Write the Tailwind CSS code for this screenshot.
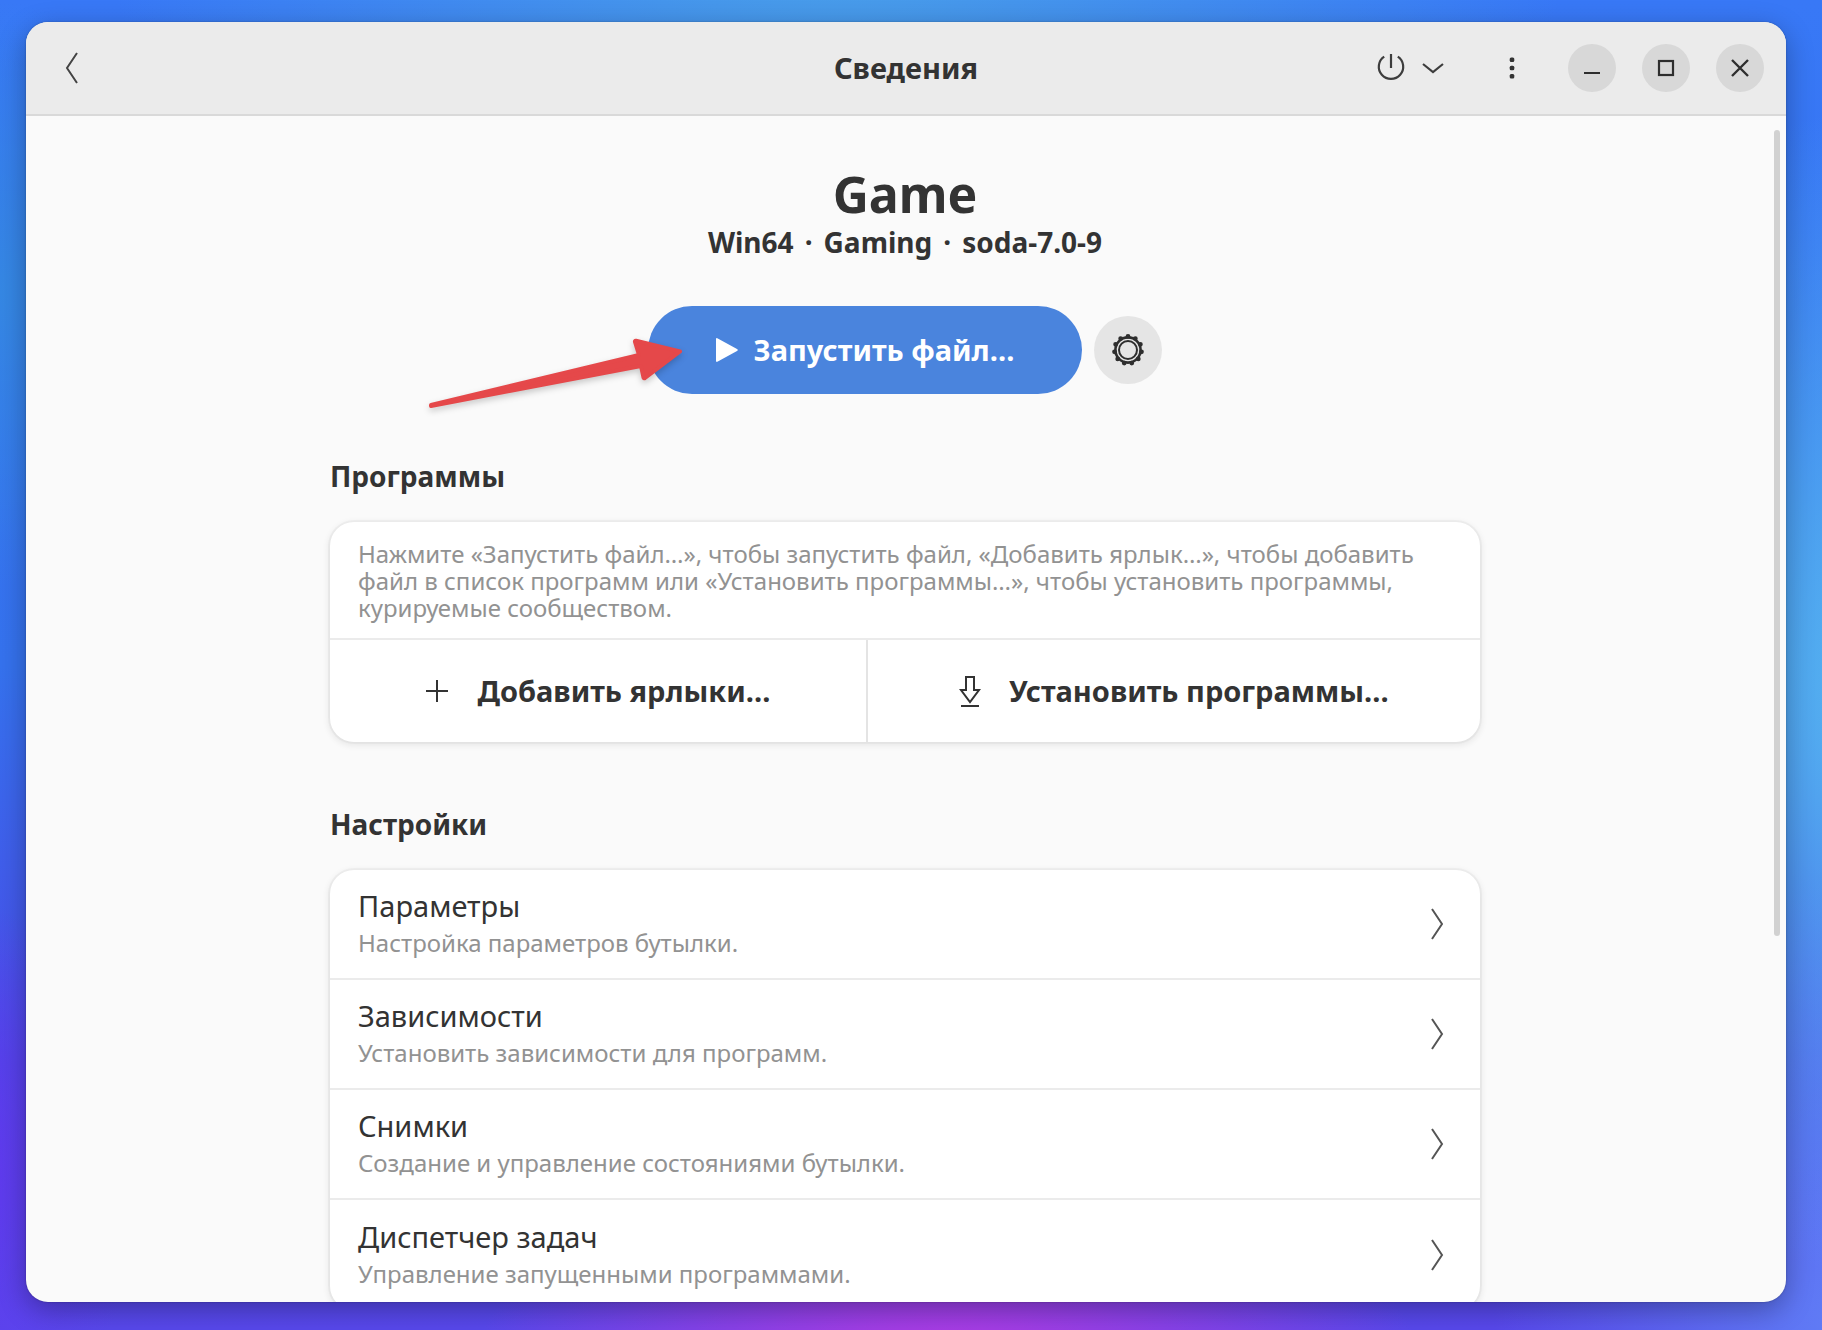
<!DOCTYPE html>
<html lang="ru">
<head>
<meta charset="utf-8">
<meta name="viewport" content="width=device-width, initial-scale=1">
<title>Сведения</title>
<script src="https://cdn.jsdelivr.net/npm/@tailwindcss/browser@4"></script>
</head>
<body class="h-screen overflow-hidden pt-[22px] pr-[36px] pb-[28px] pl-[26px] font-['Noto_Sans',sans-serif] text-[#333333] bg-[radial-gradient(ellipse_26%_16%_at_52%_103%,#b83ae4,transparent),radial-gradient(ellipse_24%_44%_at_104%_52%,#58b8f0,transparent),radial-gradient(ellipse_20%_34%_at_102%_100%,#6080f6,transparent),radial-gradient(ellipse_40%_30%_at_46%_-4%,#4aa0e8,transparent),radial-gradient(ellipse_10%_22%_at_0%_22%,#3588e4,transparent),radial-gradient(ellipse_10%_20%_at_-2%_88%,#6238ee,transparent),linear-gradient(to_bottom,#3878f6,#3572ee_50%,#4a4ae8_80%,#5848ec)]">
<div class="flex h-full flex-col overflow-hidden rounded-[22px] bg-[#fafafa] shadow-[0_0_2px_rgba(0,0,0,0.3),0_8px_28px_rgba(0,0,0,0.3)]">
  <header class="grid h-[94px] shrink-0 grid-cols-[1fr_auto_1fr] items-center border-b-2 border-[#d9d9d9] bg-[#ebebeb] pr-[22px] pl-[22px]">
    <button type="button" aria-label="Назад" class="flex size-[48px] items-center justify-center justify-self-start">
      <svg class="h-[32px] w-[16px]" viewBox="0 0 16 32" fill="none" stroke="#444" stroke-width="2"><path d="M13 1 3 16l10 15"/></svg>
    </button>
    <h1 class="text-[29px] leading-[36px] font-bold">Сведения</h1>
    <div class="flex items-center justify-self-end">
      <button type="button" aria-label="Питание" class="mr-[48px] flex items-center gap-[16px]">
        <svg class="size-[30px]" viewBox="0 0 30 30" fill="none" stroke="#3d3d3d" stroke-width="2.2"><path d="M15 1v14M8.200 3.600a12.200 12.200 0 1 0 13.600 0"/></svg>
        <svg class="h-[12px] w-[22px]" viewBox="0 0 22 12" fill="none" stroke="#3d3d3d" stroke-width="2.2"><path d="m1 2 10 8 10-8"/></svg>
      </button>
      <button type="button" aria-label="Меню" class="mr-[36px] flex w-[40px] justify-center">
        <svg class="h-[24px] w-[6px]" viewBox="0 0 6 24" fill="#333"><rect x=".7" y="1.5" width="4.6" height="4.6" rx="1.5"/><rect x=".7" y="9.7" width="4.6" height="4.6" rx="1.5"/><rect x=".7" y="17.9" width="4.6" height="4.6" rx="1.5"/></svg>
      </button>
      <div class="flex gap-[26px]">
        <button type="button" aria-label="Свернуть" class="flex size-[48px] items-center justify-center rounded-full bg-[#d8d8d8]">
          <svg class="size-[20px]" viewBox="0 0 20 20" fill="none" stroke="#2e2e2e" stroke-width="2.2"><path d="M2 15h16"/></svg>
        </button>
        <button type="button" aria-label="Развернуть" class="flex size-[48px] items-center justify-center rounded-full bg-[#d8d8d8]">
          <svg class="size-[20px]" viewBox="0 0 20 20" fill="none" stroke="#2e2e2e" stroke-width="2.2"><rect x="3" y="3" width="14" height="14"/></svg>
        </button>
        <button type="button" aria-label="Закрыть" class="flex size-[48px] items-center justify-center rounded-full bg-[#d8d8d8]">
          <svg class="size-[20px]" viewBox="0 0 20 20" fill="none" stroke="#2e2e2e" stroke-width="2.4"><path d="m2 2 16 16M18 2 2 18"/></svg>
        </button>
      </div>
    </div>
  </header>

  <main class="relative flex min-h-0 flex-1 flex-col overflow-hidden pt-[48px] pr-[24px] pl-[22px]">
    <div class="absolute top-[14px] right-[6px] h-[68%] w-[6px] rounded-full bg-[#d1d1d1]"></div>

    <div class="mx-auto flex w-full max-w-[1150px] shrink-0 flex-col">
      <section class="flex flex-col items-center">
        <h2 class="text-[50px] leading-[60px] font-bold">Game</h2>
        <p class="flex text-[28px] leading-[36px] font-bold"><span>Win64</span><span class="w-[30px] text-center">·</span><span>Gaming</span><span class="w-[30px] text-center">·</span><span>soda-7.0-9</span></p>
        <div class="mt-[46px] flex items-center gap-[12px]">
          <div class="relative">
            <button type="button" class="flex h-[88px] w-[434px] items-center justify-center gap-[16px] rounded-full bg-[#4a84dd] text-[29px] leading-[36px] font-bold text-white">
              <svg class="h-[24px] w-[22px]" viewBox="0 0 22 24" fill="currentColor"><path d="M0 1.2Q0-.6 1.8.4L21 11q1.6 1 0 2L1.8 23.6Q0 24.6 0 22.8z"/></svg>
              Запустить файл…
            </button>
            <svg class="pointer-events-none absolute top-[28px] left-[-225px] h-[90px] w-[270px] drop-shadow-[0_3px_3px_rgba(0,0,0,0.2)]" viewBox="0 0 270 90" fill="#e5484a" stroke="#e5484a" stroke-width="4" stroke-linejoin="round" aria-hidden="true"><path d="m8 71 208-50-4-13q-.4-1.500 1-1.200L257 17.500 222 44q-1.200.8-1.600-.8L218 32 8 72z"/></svg>
          </div>
          <button type="button" aria-label="Настройки запуска" class="flex size-[68px] items-center justify-center rounded-full bg-[#e5e5e5]">
            <svg class="size-[34px]" viewBox="0 0 34 34" fill="none" stroke="#2e2e2e"><circle cx="17" cy="17" r="9" stroke-width="2"/><circle cx="17" cy="17" r="12.600" stroke-width="2.600"/><circle cx="17" cy="17" r="13.600" stroke-width="4.800" stroke-linecap="round" pathLength="11" stroke-dasharray="0 1" transform="rotate(-90 17 17)"/></svg>
          </button>
        </div>
      </section>

      <section class="mt-[64px]">
        <h3 class="text-[28px] leading-[36px] font-bold">Программы</h3>
        <div class="mt-[28px] overflow-hidden rounded-[24px] bg-white shadow-[0_0_0_2px_rgba(0,0,0,0.03),0_2px_6px_2px_rgba(0,0,0,0.07)]">
          <p class="border-b-2 border-[#ebebeb] pt-[18px] pr-[64px] pb-[17px] pl-[28px] text-[24px] leading-[27px] text-[#929292]">Нажмите «Запустить файл…», чтобы запустить файл, «Добавить ярлык…», чтобы добавить файл в список программ или «Установить программы…», чтобы установить программы, курируемые сообществом.</p>
          <div class="flex">
            <button type="button" class="flex h-[102px] w-[538px] items-center justify-center gap-[28px] border-r-2 border-[#e4e4e4] text-[29px] leading-[36px] font-bold">
              <svg class="size-[24px]" viewBox="0 0 24 24" fill="none" stroke="#333" stroke-width="2"><path d="M12 1v22M1 12h22"/></svg>
              Добавить ярлыки…
            </button>
            <button type="button" class="flex h-[102px] flex-1 items-center justify-center gap-[28px] text-[29px] leading-[36px] font-bold">
              <svg class="h-[32px] w-[22px]" viewBox="0 0 22 32" fill="none" stroke="#333" stroke-width="2"><path d="M7 2h8v13h5l-9 12-9-12h5zM2 31h18"/></svg>
              Установить программы…
            </button>
          </div>
        </div>
      </section>

      <section class="mt-[64px]">
        <h3 class="text-[28px] leading-[36px] font-bold">Настройки</h3>
        <nav class="mt-[28px] flex flex-col divide-y-2 divide-[#ebebeb] overflow-hidden rounded-[24px] bg-white shadow-[0_0_0_2px_rgba(0,0,0,0.03),0_2px_6px_2px_rgba(0,0,0,0.07)]">
          <a href="#preferences" class="flex h-[110px] items-center justify-between pr-[36px] pl-[28px]">
            <span class="flex flex-col"><span class="text-[29px] leading-[38px]">Параметры</span><span class="text-[24px] leading-[36px] text-[#929292]">Настройка параметров бутылки.</span></span>
            <svg class="h-[32px] w-[14px]" viewBox="0 0 14 32" fill="none" stroke="#555" stroke-width="2"><path d="m2 1 10 15L2 31"/></svg>
          </a>
          <a href="#dependencies" class="flex h-[110px] items-center justify-between pr-[36px] pl-[28px]">
            <span class="flex flex-col"><span class="text-[29px] leading-[38px]">Зависимости</span><span class="text-[24px] leading-[36px] text-[#929292]">Установить зависимости для программ.</span></span>
            <svg class="h-[32px] w-[14px]" viewBox="0 0 14 32" fill="none" stroke="#555" stroke-width="2"><path d="m2 1 10 15L2 31"/></svg>
          </a>
          <a href="#snapshots" class="flex h-[110px] items-center justify-between pr-[36px] pl-[28px]">
            <span class="flex flex-col"><span class="text-[29px] leading-[38px]">Снимки</span><span class="text-[24px] leading-[36px] text-[#929292]">Создание и управление состояниями бутылки.</span></span>
            <svg class="h-[32px] w-[14px]" viewBox="0 0 14 32" fill="none" stroke="#555" stroke-width="2"><path d="m2 1 10 15L2 31"/></svg>
          </a>
          <a href="#tasks" class="flex h-[110px] items-center justify-between pr-[36px] pl-[28px]">
            <span class="flex flex-col"><span class="text-[29px] leading-[38px]">Диспетчер задач</span><span class="text-[24px] leading-[36px] text-[#929292]">Управление запущенными программами.</span></span>
            <svg class="h-[32px] w-[14px]" viewBox="0 0 14 32" fill="none" stroke="#555" stroke-width="2"><path d="m2 1 10 15L2 31"/></svg>
          </a>
        </nav>
      </section>
    </div>
  </main>
</div>
</body>
</html>
